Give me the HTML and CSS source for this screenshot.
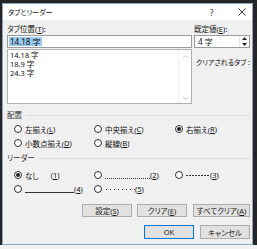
FILE: index.html
```html
<!DOCTYPE html>
<html lang="ja">
<head>
  <meta charset="UTF-8">
  <title>タブとリーダー</title>
  <link rel="stylesheet" href="styles.css">
</head>
<body>
  <div class="dialog">
    <div class="titlebar">
      <span class="title">タブとリーダー</span>
      <span class="help">?</span>
      <svg class="close" width="8" height="8" viewBox="0 0 8 8"><path d="M0.5 0.5L7.5 7.5M7.5 0.5L0.5 7.5" stroke="#222" stroke-width="0.9"/></svg>
    </div>

    <div class="content">
      <div class="top">
        <div class="col-left">
          <div class="label">タブ位置(<u>T</u>):</div>
          <div class="textbox"><span class="sel">14.18 字</span></div>
          <div class="listbox">
            <div class="items">
              <div>14.18 字</div>
              <div>18.9 字</div>
              <div>24.3 字</div>
            </div>
            <div class="scrollbar">
              <svg width="7" height="5" viewBox="0 0 7 5"><path d="M1 4L3.5 1.5L6 4" fill="none" stroke="#c4c4c4"/></svg>
              <svg width="7" height="5" viewBox="0 0 7 5"><path d="M1 1L3.5 3.5L6 1" fill="none" stroke="#c4c4c4"/></svg>
            </div>
          </div>
        </div>
        <div class="col-right">
          <div class="label">既定値(<u>E</u>):</div>
          <div class="spinbox">
            <span>4 字</span>
            <div class="spin">
              <svg width="5" height="3" viewBox="0 0 5 3"><path d="M0 3L2.5 0L5 3Z" fill="#222"/></svg>
              <svg width="5" height="3" viewBox="0 0 5 3"><path d="M0 0L2.5 3L5 0Z" fill="#222"/></svg>
            </div>
          </div>
          <div class="cleared">クリアされるタブ :</div>
        </div>
      </div>

      <div class="group-head"><span>配置</span></div>
      <div class="options">
        <label class="opt"><span class="radio"></span>左揃え(<u>L</u>)</label>
        <label class="opt"><span class="radio"></span>中央揃え(<u>C</u>)</label>
        <label class="opt"><span class="radio on"></span>右揃え(<u>R</u>)</label>
        <label class="opt"><span class="radio"></span>小数点揃え(<u>D</u>)</label>
        <label class="opt"><span class="radio"></span>縦線(<u>B</u>)</label>
      </div>

      <div class="group-head leader-head"><span>リーダー</span></div>
      <div class="options leaders">
        <label class="opt"><span class="radio on"></span>なし<span class="num">(<u>1</u>)</span></label>
        <label class="opt"><span class="radio"></span><span class="lead dots"></span>(<u>2</u>)</label>
        <label class="opt"><span class="radio"></span><span class="lead dashes"></span>(<u>3</u>)</label>
        <label class="opt"><span class="radio"></span><span class="lead line"></span>(<u>4</u>)</label>
        <label class="opt"><span class="radio"></span><span class="lead middots"></span>(<u>5</u>)</label>
      </div>

      <div class="buttons">
        <button class="btn">設定(<u>S</u>)</button>
        <button class="btn">クリア(<u>E</u>)</button>
        <button class="btn wide">すべてクリア(<u>A</u>)</button>
      </div>
      <div class="buttons bottom">
        <button class="btn default">OK</button>
        <button class="btn">キャンセル</button>
      </div>
    </div>
  </div>
</body>
</html>
```

FILE: styles.css
```css
body {
  margin: 0;
  padding: 3px 0 0 2px;
  background: linear-gradient(#262626 0 245px, #f2f2f2 245px);
  font-family: "Noto Sans", "Noto Sans CJK JP", sans-serif;
  font-size: 7.5px;
  font-feature-settings: "palt";
  color: #111;
  height: 249px;
  box-sizing: border-box;
  overflow: hidden;
}

.dialog {
  width: 251px;
  height: 242px;
  box-sizing: border-box;
  border: 1px solid #8ea4c0;
  background: #f0f0f0;
  display: flex;
  flex-direction: column;
}

.titlebar {
  height: 16px;
  background: #fff;
  display: flex;
  align-items: center;
  padding-left: 5px;
  flex-shrink: 0;
}

.title {
  font-size: 7px;
  flex: 1;
}

.help {
  font-size: 8px;
  width: 28px;
  color: #222;
}

.close {
  margin-right: 6px;
}

.content {
  padding: 4px 2px 0 4px;
}

.top {
  display: grid;
  grid-template-columns: 185px 56px;
  gap: 2px;
}

.label {
  line-height: 10px;
  height: 10px;
  margin-bottom: 1px;
  white-space: nowrap;
}

.textbox {
  height: 13px;
  box-sizing: border-box;
  border: 1px solid #9a9a9a;
  background: #fff;
  padding: 1px 1px;
  display: flex;
  align-items: center;
}

.sel {
  background: #99c9ef;
  font-size: 8px;
  line-height: 9px;
  padding: 0 1px;
}

.listbox {
  height: 55px;
  margin-top: 1px;
  box-sizing: border-box;
  border: 1px solid #b0b0b0;
  background: #fff;
  display: flex;
}

.items {
  flex: 1;
  padding: 1px 2px;
  font-size: 7.5px;
  line-height: 9px;
}

.scrollbar {
  width: 12px;
  border-left: 1px solid #f0f0f0;
  display: flex;
  flex-direction: column;
  justify-content: space-between;
  align-items: center;
  padding: 4px 0 2px;
}

.spinbox {
  height: 13px;
  box-sizing: border-box;
  border: 1px solid #9a9a9a;
  background: #fff;
  display: flex;
  align-items: center;
  padding-left: 3px;
  font-size: 8px;
}

.spinbox span {
  flex: 1;
}

.spin {
  width: 9px;
  height: 11px;
  display: flex;
  flex-direction: column;
  justify-content: space-around;
  align-items: center;
  border-left: 1px solid #e6e6e6;
}

.cleared {
  margin-top: 10px;
  line-height: 10px;
  padding-left: 2px;
  white-space: nowrap;
  font-size: 7px;
}

.group-head {
  display: flex;
  align-items: center;
  gap: 4px;
  margin-top: 6px;
  line-height: 10px;
  color: #333;
}

.group-head::after {
  content: "";
  flex: 1;
  border-top: 1px solid #dcdcdc;
}

.leader-head {
  margin-top: 3px;
}

.options {
  display: grid;
  grid-template-columns: 80px 81px auto;
  grid-auto-rows: 14px;
  margin-top: 2px;
  padding-left: 7px;
}

.leaders {
  margin-top: 5px;
}

.opt {
  display: flex;
  align-items: center;
  white-space: nowrap;
}

.radio {
  width: 8px;
  height: 8px;
  box-sizing: border-box;
  border: 1px solid #333;
  border-radius: 50%;
  background: #fff;
  margin-right: 3px;
  display: flex;
  align-items: center;
  justify-content: center;
}

.radio.on::after {
  content: "";
  width: 4px;
  height: 4px;
  border-radius: 50%;
  background: #222;
}

.num {
  margin-left: 12px;
}

.lead {
  display: inline-block;
  height: 8px;
}

.dots {
  width: 45px;
  background: repeating-linear-gradient(90deg, #333 0 1px, transparent 1px 2px) bottom / 100% 1px no-repeat;
}

.dashes {
  width: 24px;
  background: repeating-linear-gradient(90deg, #333 0 2px, transparent 2px 3px) center / 100% 1px no-repeat;
}

.line {
  width: 49px;
  border-bottom: 1px solid #333;
  box-sizing: border-box;
}

.middots {
  width: 29px;
  margin-left: 1px;
  background: repeating-linear-gradient(90deg, #333 0 1px, transparent 1px 4px) center / 100% 1px no-repeat;
}

.buttons {
  display: flex;
  justify-content: flex-end;
  gap: 5px;
  margin-top: 8px;
}

.buttons.bottom {
  gap: 6px;
}

.btn {
  width: 50px;
  height: 13px;
  padding: 0;
  font: inherit;
  color: #222;
  background: #e1e1e1;
  border: 1px solid #adadad;
}

.btn.wide {
  width: 57px;
  margin-left: 1px;
}

.bottom .btn {
  height: 14px;
}

.btn.default {
  border-color: #0078d7;
}
```
